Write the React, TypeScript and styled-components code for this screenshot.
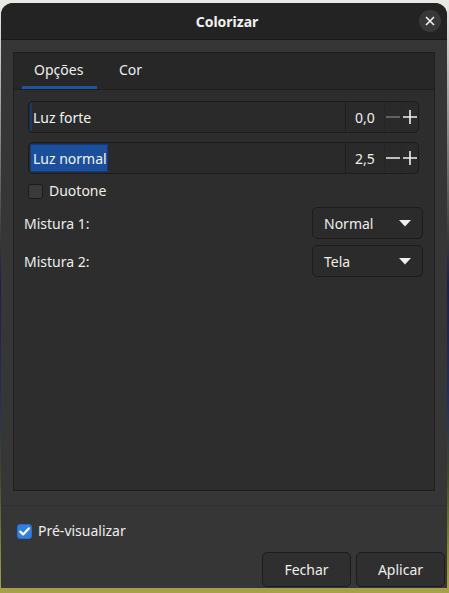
import React from "react";
import styled, { createGlobalStyle } from "styled-components";

const Global = createGlobalStyle`
  html, body { margin: 0; padding: 0; }
  body {
    width: 449px; height: 593px; overflow: hidden;
    background: linear-gradient(180deg, #e9e9e6 0%, #d6d6cf 6%, #3a3a3a 40%, #1c1f4a 48%, #26305a 68%, #3a4a2a 80%, #8c8a3c 94%, #a7a24a 100%);
    font-family: "Noto Sans", "DejaVu Sans", sans-serif;
  }
`;

const Dialog = styled.div`
  margin: 3px 2px 0 1px;
  width: 446px;
  height: 585px;
  background: #363636;
  border-radius: 12px 12px 0 0;
  display: flex;
  flex-direction: column;
  overflow: hidden;
  color: #eeeeec;
`;

const Header = styled.div`
  height: 36px;
  flex: none;
  background: #232323;
  border-bottom: 1px solid #1a1a1a;
  display: grid;
  grid-template-columns: 1fr auto 1fr;
  align-items: center;
  padding: 0 6px 0 12px;
`;

const Title = styled.div`
  grid-column: 2;
  font-weight: 700;
  font-size: 14px;
  color: #f2f2f2;
`;

const CloseButton = styled.div`
  grid-column: 3;
  justify-self: end;
  width: 22px;
  height: 22px;
  border-radius: 50%;
  background: #383838;
  display: flex;
  align-items: center;
  justify-content: center;
`;

const Body = styled.div`
  flex: 1;
  display: flex;
  flex-direction: column;
  padding: 12px 12px 0 12px;
`;

const Notebook = styled.div`
  height: 437px;
  border: 1px solid #1e1e1e;
  background: #2d2d2d;
  display: flex;
  flex-direction: column;
`;

const TabBar = styled.div`
  height: 36px;
  background: #272727;
  border-bottom: 1px solid #1e1e1e;
  display: flex;
  padding-left: 8px;
`;

const Tab = styled.div<{ $active?: boolean }>`
  position: relative;
  padding: 0 0 0 ${(p) => (p.$active ? "12px" : "22px")};
  width: ${(p) => (p.$active ? "75px" : "auto")};
  box-sizing: border-box;
  display: flex;
  align-items: center;
  font-size: 14px;
  color: #eeeeec;
  padding-bottom: 3px;
  &::after {
    content: "";
    display: ${(p) => (p.$active ? "block" : "none")};
    position: absolute;
    left: 0;
    right: 0;
    bottom: 0;
    height: 3px;
    background: #1c54a3;
  }
`;

const Page = styled.div`
  flex: 1;
  padding: 11px 11px 0 10px;
  display: flex;
  flex-direction: column;
`;

const SpinRow = styled.div<{ $gap?: number }>`
  margin: 0 4px ${(p) => p.$gap ?? 0}px 4px;
  height: 30px;
  border: 1px solid #1c1c1c;
  border-radius: 5px;
  background: #2a2a2a;
  display: flex;
  align-items: stretch;
  overflow: hidden;
`;

const Track = styled.div`
  flex: 1;
  position: relative;
  display: flex;
  align-items: center;
  border-right: 1px solid #1e1e1e;
`;

const Fill = styled.div`
  position: absolute;
  left: 1px;
  top: 1px;
  bottom: 1px;
  background: #1b4f9b;
  border: 1px solid #123a78;
  box-sizing: border-box;
`;

const TrackLabel = styled.span`
  position: relative;
  padding-left: 4px;
  font-size: 14px;
  color: #f2f2f2;
`;

const Value = styled.div`
  width: 38px;
  display: flex;
  align-items: center;
  justify-content: center;
  font-size: 14px;
  color: #eeeeec;
  border-right: 1px solid #262626;
`;

const StepButton = styled.div<{ $disabled?: boolean }>`
  width: 16px;
  display: flex;
  align-items: center;
  justify-content: center;
  opacity: ${(p) => (p.$disabled ? 0.35 : 1)};
  & + & { border-left: 1px solid #262626; }
`;

const CheckRow = styled.label<{ $indent?: number; $mt?: number }>`
  display: flex;
  align-items: center;
  gap: 6px;
  height: 16px;
  line-height: 16px;
  margin-left: ${(p) => p.$indent ?? 0}px;
  margin-top: ${(p) => p.$mt ?? 0}px;
  font-size: 14px;
  color: #eeeeec;
`;

const Box = styled.span<{ $checked?: boolean }>`
  width: 15px;
  height: 15px;
  flex: none;
  border-radius: 3px;
  box-sizing: border-box;
  border: 1px solid ${(p) => (p.$checked ? "#2c6fc8" : "#1c1c1c")};
  background: ${(p) => (p.$checked ? "#3080e0" : "#3a3a3a")};
  display: flex;
  align-items: center;
  justify-content: center;
`;

const FieldRow = styled.div<{ $mt: number }>`
  margin-top: ${(p) => p.$mt}px;
  display: flex;
  align-items: center;
  justify-content: space-between;
`;

const FieldLabel = styled.span`
  font-size: 14px;
  color: #eeeeec;
`;

const Combo = styled.div`
  width: 111px;
  height: 32px;
  box-sizing: border-box;
  border: 1px solid #1c1c1c;
  border-radius: 5px;
  background: #2b2b2b;
  display: flex;
  align-items: center;
  justify-content: space-between;
  padding: 0 11px 0 11px;
  font-size: 14px;
  color: #eeeeec;
`;

const Separator = styled.div`
  margin: 14px -12px 0 -12px;
  height: 1px;
  background: #303030;
`;

const Footer = styled.div`
  display: flex;
  flex-direction: column;
`;

const ButtonRow = styled.div`
  margin-top: 13px;
  display: flex;
  justify-content: flex-end;
  gap: 5px;
  margin-right: -10px;
`;

const Button = styled.div`
  width: 89px;
  height: 35px;
  box-sizing: border-box;
  border: 1px solid #1c1c1c;
  border-radius: 5px;
  background: #2f2f2f;
  display: flex;
  align-items: center;
  justify-content: center;
  font-size: 14px;
  color: #eeeeec;
`;

const Minus = () => (
  <svg width="14" height="14" viewBox="0 0 14 14">
    <path d="M0 7h14" stroke="#f0f0f0" strokeWidth="1.6" />
  </svg>
);
const Plus = () => (
  <svg width="14" height="14" viewBox="0 0 14 14">
    <path d="M0 7h14M7 0v14" stroke="#f0f0f0" strokeWidth="1.6" />
  </svg>
);
const Caret = () => (
  <svg width="12" height="7" viewBox="0 0 12 7">
    <path d="M0 0h12L6 6.5z" fill="#f0f0f0" />
  </svg>
);
const Tick = () => (
  <svg width="11" height="9" viewBox="0 0 11 9">
    <path d="M1.3 4.6l2.8 2.8L9.8 1.4" stroke="#fff" strokeWidth="2.2" fill="none" strokeLinecap="round" strokeLinejoin="round" />
  </svg>
);

export default function App() {
  return (
    <>
      <Global />
      <Dialog>
        <Header>
          <Title>Colorizar</Title>
          <CloseButton>
            <svg width="10" height="10" viewBox="0 0 10 10">
              <path d="M1 1l8 8M9 1l-8 8" stroke="#f2f2f2" strokeWidth="1.6" />
            </svg>
          </CloseButton>
        </Header>
        <Body>
          <Notebook>
            <TabBar>
              <Tab $active>Opções</Tab>
              <Tab>Cor</Tab>
            </TabBar>
            <Page>
              <SpinRow $gap={9}>
                <Track>
                  <Fill style={{ width: 2 }} />
                  <TrackLabel>Luz forte</TrackLabel>
                </Track>
                <Value>0,0</Value>
                <StepButton $disabled>
                  <Minus />
                </StepButton>
                <StepButton>
                  <Plus />
                </StepButton>
              </SpinRow>
              <SpinRow $gap={9}>
                <Track>
                  <Fill style={{ width: 78 }} />
                  <TrackLabel>Luz normal</TrackLabel>
                </Track>
                <Value>2,5</Value>
                <StepButton>
                  <Minus />
                </StepButton>
                <StepButton>
                  <Plus />
                </StepButton>
              </SpinRow>
              <CheckRow $indent={4}>
                <Box />
                Duotone
              </CheckRow>
              <FieldRow $mt={8}>
                <FieldLabel>Mistura 1:</FieldLabel>
                <Combo>
                  Normal
                  <Caret />
                </Combo>
              </FieldRow>
              <FieldRow $mt={6}>
                <FieldLabel>Mistura 2:</FieldLabel>
                <Combo>
                  Tela
                  <Caret />
                </Combo>
              </FieldRow>
            </Page>
          </Notebook>
          <Footer>
            <Separator />
            <CheckRow $indent={4} $mt={17}>
              <Box $checked>
                <Tick />
              </Box>
              Pré-visualizar
            </CheckRow>
            <ButtonRow>
              <Button>Fechar</Button>
              <Button>Aplicar</Button>
            </ButtonRow>
          </Footer>
        </Body>
      </Dialog>
    </>
  );
}
